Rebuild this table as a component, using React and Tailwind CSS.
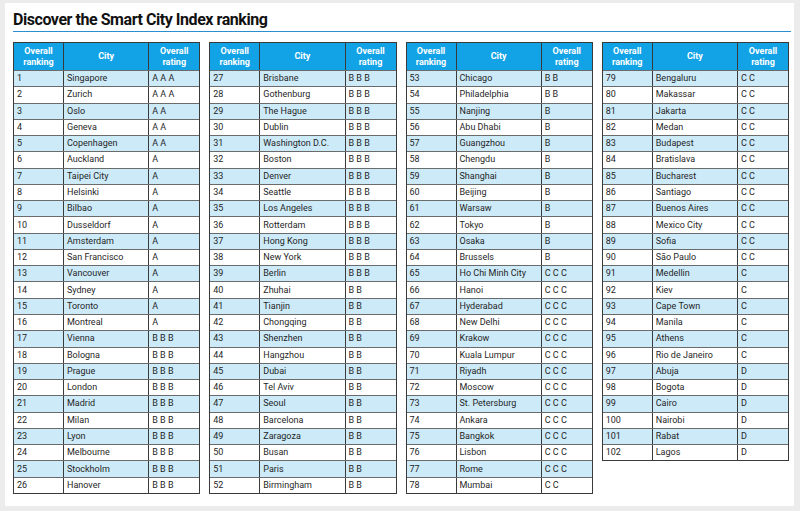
import React from "react";

const raw = `Singapore|A A A
Zurich|A A A
Oslo|A A
Geneva|A A
Copenhagen|A A
Auckland|A
Taipei City|A
Helsinki|A
Bilbao|A
Dusseldorf|A
Amsterdam|A
San Francisco|A
Vancouver|A
Sydney|A
Toronto|A
Montreal|A
Vienna|B B B
Bologna|B B B
Prague|B B B
London|B B B
Madrid|B B B
Milan|B B B
Lyon|B B B
Melbourne|B B B
Stockholm|B B B
Hanover|B B B
Brisbane|B B B
Gothenburg|B B B
The Hague|B B B
Dublin|B B B
Washington D.C.|B B B
Boston|B B B
Denver|B B B
Seattle|B B B
Los Angeles|B B B
Rotterdam|B B B
Hong Kong|B B B
New York|B B B
Berlin|B B B
Zhuhai|B B
Tianjin|B B
Chongqing|B B
Shenzhen|B B
Hangzhou|B B
Dubai|B B
Tel Aviv|B B
Seoul|B B
Barcelona|B B
Zaragoza|B B
Busan|B B
Paris|B B
Birmingham|B B
Chicago|B B
Philadelphia|B B
Nanjing|B
Abu Dhabi|B
Guangzhou|B
Chengdu|B
Shanghai|B
Beijing|B
Warsaw|B
Tokyo|B
Osaka|B
Brussels|B
Ho Chi Minh City|C C C
Hanoi|C C C
Hyderabad|C C C
New Delhi|C C C
Krakow|C C C
Kuala Lumpur|C C C
Riyadh|C C C
Moscow|C C C
St. Petersburg|C C C
Ankara|C C C
Bangkok|C C C
Lisbon|C C C
Rome|C C C
Mumbai|C C
Bengaluru|C C
Makassar|C C
Jakarta|C C
Medan|C C
Budapest|C C
Bratislava|C C
Bucharest|C C
Santiago|C C
Buenos Aires|C C
Mexico City|C C
Sofia|C C
São Paulo|C C
Medellin|C
Kiev|C
Cape Town|C
Manila|C
Athens|C
Rio de Janeiro|C
Abuja|D
Bogota|D
Cairo|D
Nairobi|D
Rabat|D
Lagos|D`;

const rows = raw.split("\n").map((l, i) => {
  const [city, rating] = l.split("|");
  return { rank: i + 1, city, rating };
});

const chunks = [rows.slice(0, 26), rows.slice(26, 52), rows.slice(52, 78), rows.slice(78)];

function Table({ data }) {
  return (
    <div className="self-start border border-[#3a3a3a] text-[9px] leading-none text-[#1f1f1f]">
      <div className="grid h-[27px] grid-cols-[50px_1fr_50px] bg-[#12a3e6] font-bold leading-[11px] text-white">
        <div className="flex items-center justify-center border-r border-[#3a3a3a] text-center">
          Overall
          <br />
          ranking
        </div>
        <div className="flex items-center justify-center border-r border-[#3a3a3a]">City</div>
        <div className="flex items-center justify-center text-center">
          Overall
          <br />
          rating
        </div>
      </div>
      {data.map((r, i) => (
        <div
          key={r.rank}
          className={`grid h-[16.28px] grid-cols-[50px_1fr_50px] border-t border-[#6b6b6b] ${
            i % 2 === 0 ? "bg-[#cdeaf8]" : "bg-white"
          }`}
        >
          <div className="flex items-center border-r border-[#3a3a3a] pl-[3px]">{r.rank}</div>
          <div className="flex items-center border-r border-[#3a3a3a] pl-[3px]">{r.city}</div>
          <div className="flex items-center pl-[3px]">{r.rating}</div>
        </div>
      ))}
    </div>
  );
}

export default function App() {
  return (
    <div
      className="h-[511px] w-[800px] overflow-hidden bg-[#ececec] pl-[5px] pr-[6px] pt-[3px]"
      style={{ fontFamily: "Roboto, 'Liberation Sans', sans-serif" }}
    >
      <div className="h-[503px] bg-white pl-[8px] pr-[3px] pt-[8px]">
        <div className="border-b border-[#2a8fd0] pb-[2px]">
          <h1 className="text-[16px] font-bold leading-[18px] tracking-[-0.45px] text-[#111]">
            Discover the Smart City Index ranking
          </h1>
        </div>
        <div className="mt-[10px] grid grid-cols-4 gap-x-[9px] pr-[2px]">
          {chunks.map((c, i) => (
            <Table key={i} data={c} />
          ))}
        </div>
      </div>
    </div>
  );
}
